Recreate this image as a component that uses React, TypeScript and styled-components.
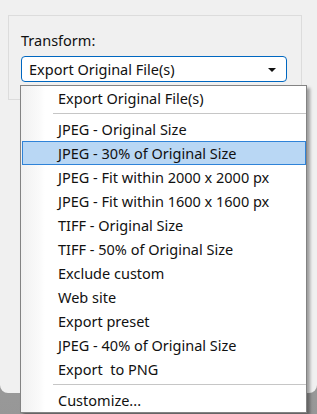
import styled, { createGlobalStyle } from 'styled-components'

const GlobalStyle = createGlobalStyle`
  html, body {
    margin: 0;
    padding: 0;
    background: #9f9f9f;
  }
  body {
    font-family: "Noto Sans", "Open Sans", sans-serif;
    font-size: 14.5px;
    color: #111;
  }
`

const Page = styled.div`
  position: relative;
  width: 317px;
  height: 414px;
  overflow: hidden;
  background: linear-gradient(to bottom, #b4b4b4, #979797);
`

const Window = styled.div`
  width: 317px;
  height: 393px;
  background: #f0f0f0;
  border-bottom-left-radius: 8px;
  border-bottom-right-radius: 8px;
  padding: 15px 15px 0 8px;
  box-sizing: border-box;
`

const GroupBox = styled.div`
  height: 85px;
  border: 1px solid #dcdcdc;
  box-sizing: border-box;
  padding: 14px 14px 0 12px;
  display: flex;
  flex-direction: column;
  gap: 6px;
`

const Label = styled.div`
  line-height: 20px;
  height: 20px;
`

const Select = styled.div`
  width: 266px;
  height: 26px;
  box-sizing: border-box;
  border: 1px solid #0067c0;
  border-radius: 4px;
  background: #fff;
  display: flex;
  align-items: center;
  justify-content: space-between;
  padding: 0 10px 0 7px;
`

const Arrow = styled.span`
  width: 0;
  height: 0;
  border-left: 4px solid transparent;
  border-right: 4px solid transparent;
  border-top: 4px solid #111;
  margin-top: 1px;
`

const Menu = styled.div`
  position: absolute;
  left: 20px;
  top: 85px;
  width: 287px;
  box-sizing: border-box;
  border: 1px solid #838383;
  background: linear-gradient(to right, #f1f1f1 0, #fafafa 18px, #fff 24px);
  box-shadow: 3px 3px 3px rgba(0, 0, 0, 0.35);
  display: flex;
  flex-direction: column;
`

const Item = styled.div<{ $active?: boolean }>`
  height: 24px;
  line-height: 22px;
  box-sizing: border-box;
  margin: 0 0 0 1px;
  padding-left: 35px;
  border: 1px solid ${(p) => (p.$active ? '#2f83d8' : 'transparent')};
  background: ${(p) => (p.$active ? '#b9d7f4' : 'transparent')};
  white-space: pre;
`

const Separator = styled.div`
  height: 7px;
  display: flex;
  align-items: center;
  padding-left: 32px;

  &::after {
    content: '';
    flex: 1;
    height: 1px;
    background: #c6c6c6;
  }
`

const options = [
  'JPEG - Original Size',
  'JPEG - 30% of Original Size',
  'JPEG - Fit within 2000 x 2000 px',
  'JPEG - Fit within 1600 x 1600 px',
  'TIFF - Original Size',
  'TIFF - 50% of Original Size',
  'Exclude custom',
  'Web site',
  'Export preset',
  'JPEG - 40% of Original Size',
  'Export  to PNG',
]

const App = () => {
  return (
    <>
      <GlobalStyle />
      <Page>
        <Window>
          <GroupBox>
            <Label>Transform:</Label>
            <Select>
              <span>Export Original File(s)</span>
              <Arrow />
            </Select>
          </GroupBox>
        </Window>
        <Menu>
          <Item>Export Original File(s)</Item>
          <Separator />
          {options.map((o) => (
            <Item key={o} $active={o === 'JPEG - 30% of Original Size'}>
              {o}
            </Item>
          ))}
          <Separator />
          <Item>Customize...</Item>
        </Menu>
      </Page>
    </>
  )
}

export default App
